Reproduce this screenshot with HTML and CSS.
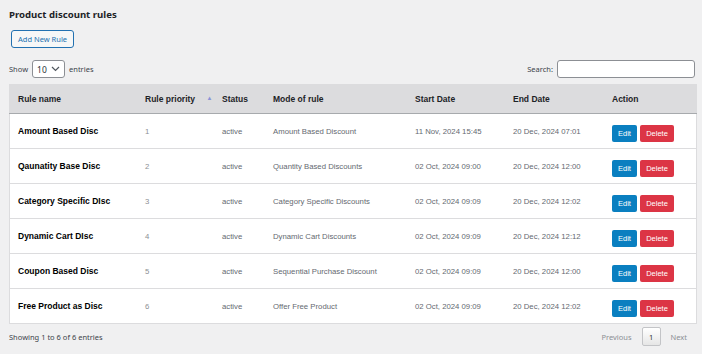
FILE: index.html
```html
<!DOCTYPE html>
<html lang="en">
<head>
  <meta charset="UTF-8">
  <meta name="viewport" content="width=device-width, initial-scale=1.0">
  <title>Product discount rules</title>
  <link rel="stylesheet" href="styles.css">
</head>
<body>
  <div class="wrap">
    <h1 class="page-title">Product discount rules</h1>
    <button class="add-button">Add New Rule</button>

    <div class="toolbar">
      <div class="length">
        <span>Show</span>
        <div class="select-box">
          <span>10</span>
          <svg width="9" height="6" viewBox="0 0 9 6"><path d="M1 1l3.5 3.5L8 1" fill="none" stroke="#50575e" stroke-width="1.2"/></svg>
        </div>
        <span>entries</span>
      </div>
      <div class="search">
        <span>Search:</span>
        <div class="search-input"></div>
      </div>
    </div>

    <table class="rules">
      <thead>
        <tr>
          <th class="c-name">Rule name</th>
          <th class="c-prio">Rule priority <span class="sort">&#9650;</span></th>
          <th class="c-status">Status</th>
          <th class="c-mode">Mode of rule</th>
          <th class="c-start">Start Date</th>
          <th class="c-end">End Date</th>
          <th class="c-action">Action</th>
        </tr>
      </thead>
      <tbody>
        <tr>
          <td class="name">Amount Based Disc</td>
          <td class="num">1</td>
          <td>active</td>
          <td>Amount Based Discount</td>
          <td>11 Nov, 2024 15:45</td>
          <td>20 Dec, 2024 07:01</td>
          <td><button class="edit">Edit</button><button class="delete">Delete</button></td>
        </tr>
        <tr>
          <td class="name">Qaunatity Base Disc</td>
          <td class="num">2</td>
          <td>active</td>
          <td>Quantity Based Discounts</td>
          <td>02 Oct, 2024 09:00</td>
          <td>20 Dec, 2024 12:00</td>
          <td><button class="edit">Edit</button><button class="delete">Delete</button></td>
        </tr>
        <tr>
          <td class="name">Category Specific DIsc</td>
          <td class="num">3</td>
          <td>active</td>
          <td>Category Specific Discounts</td>
          <td>02 Oct, 2024 09:09</td>
          <td>20 Dec, 2024 12:02</td>
          <td><button class="edit">Edit</button><button class="delete">Delete</button></td>
        </tr>
        <tr>
          <td class="name">Dynamic Cart DIsc</td>
          <td class="num">4</td>
          <td>active</td>
          <td>Dynamic Cart Discounts</td>
          <td>02 Oct, 2024 09:09</td>
          <td>20 Dec, 2024 12:12</td>
          <td><button class="edit">Edit</button><button class="delete">Delete</button></td>
        </tr>
        <tr>
          <td class="name">Coupon Based Disc</td>
          <td class="num">5</td>
          <td>active</td>
          <td>Sequential Purchase Discount</td>
          <td>02 Oct, 2024 09:09</td>
          <td>20 Dec, 2024 12:00</td>
          <td><button class="edit">Edit</button><button class="delete">Delete</button></td>
        </tr>
        <tr>
          <td class="name">Free Product as Disc</td>
          <td class="num">6</td>
          <td>active</td>
          <td>Offer Free Product</td>
          <td>02 Oct, 2024 09:09</td>
          <td>20 Dec, 2024 12:02</td>
          <td><button class="edit">Edit</button><button class="delete">Delete</button></td>
        </tr>
      </tbody>
    </table>

    <div class="footer">
      <span class="info">Showing 1 to 6 of 6 entries</span>
      <div class="paging">
        <span class="page-link">Previous</span>
        <span class="page-current">1</span>
        <span class="page-link">Next</span>
      </div>
    </div>
  </div>
</body>
</html>
```

FILE: styles.css
```css
body{
  margin: 0;
  background-color: #f0f0f1;
  font-family: "Noto Sans", "Open Sans", sans-serif;
  color: #3c434a;
}
.wrap{
  padding: 6px 7px 0 9px;
}
.page-title{
  margin: 0;
  font-size: 9.6px;
  font-weight: 700;
  color: #1d2327;
  line-height: 18px;
}
.add-button{
  margin: 6px 0 0 2px;
  height: 18px;
  padding: 0 6px;
  border: 1px solid #2271b1;
  border-radius: 3px;
  background-color: #f6f7f7;
  color: #2271b1;
  font-family: "Noto Sans", sans-serif;
  font-size: 7.5px;
  line-height: 16px;
  display: block;
}
.toolbar{
  display: flex;
  justify-content: space-between;
  align-items: center;
  margin-top: 12px;
  font-size: 7.5px;
}
.length, .search{
  display: flex;
  align-items: center;
  gap: 4px;
}
.select-box{
  width: 23px;
  height: 16px;
  padding: 0 4px;
  border: 1px solid #8c8f94;
  border-radius: 3px;
  background-color: #fff;
  display: flex;
  align-items: center;
  justify-content: space-between;
  font-size: 8.5px;
  color: #2c3338;
}
.search-input{
  width: 136px;
  height: 16px;
  border: 1px solid #8c8f94;
  border-radius: 3px;
  background-color: #fff;
}
.rules{
  margin-top: 6px;
  width: 688px;
  border-collapse: collapse;
  background-color: #fff;
  border: 1px solid #dcdcde;
  font-family: "Liberation Sans", Arial, sans-serif;
  table-layout: fixed;
}
.rules th{
  height: 28px;
  background-color: #dcdcde;
  border-bottom: 1px solid #a7aaad;
  text-align: left;
  font-size: 8.5px;
  font-weight: 700;
  color: #1d2327;
  padding: 0 0 0 8px;
  white-space: nowrap;
}
.rules td{
  height: 34px;
  border-bottom: 1px solid #dcdcde;
  padding: 0 0 0 8px;
  font-size: 7.75px;
  color: #646970;
  white-space: nowrap;
}
.rules td.num{
  color: #8c8f94;
}
.rules td.name{
  font-size: 8.5px;
  font-weight: 700;
  color: #000;
}
.c-name{ width: 119px; }
.c-prio{ width: 69px; }
.c-status{ width: 43px; }
.c-mode{ width: 134px; }
.c-start{ width: 90px; }
.c-end{ width: 91px; }
.sort{
  font-size: 6px;
  color: #8a93d8;
  margin-left: 9px;
  vertical-align: 2px;
}
.edit, .delete{
  height: 17px;
  border: none;
  border-radius: 2px;
  color: #fff;
  font-family: "Liberation Sans", Arial, sans-serif;
  font-size: 7.5px;
  padding: 0;
  margin-top: 5px;
}
.edit{
  width: 25px;
  background-color: #0a7fc0;
}
.delete{
  width: 34px;
  margin-left: 3px;
  background-color: #dc3545;
}
.footer{
  display: flex;
  justify-content: space-between;
  align-items: center;
  margin-top: 3px;
  font-size: 7.5px;
  width: 688px;
}
.paging{
  display: flex;
  align-items: center;
}
.page-link{
  color: #8c8f94;
  padding: 0 10px;
}
.page-current{
  width: 17px;
  height: 17px;
  border: 1px solid #c3c4c7;
  border-radius: 2px;
  background: linear-gradient(#fff, #e6e6e6);
  display: flex;
  align-items: center;
  justify-content: center;
  color: #333;
}
```
